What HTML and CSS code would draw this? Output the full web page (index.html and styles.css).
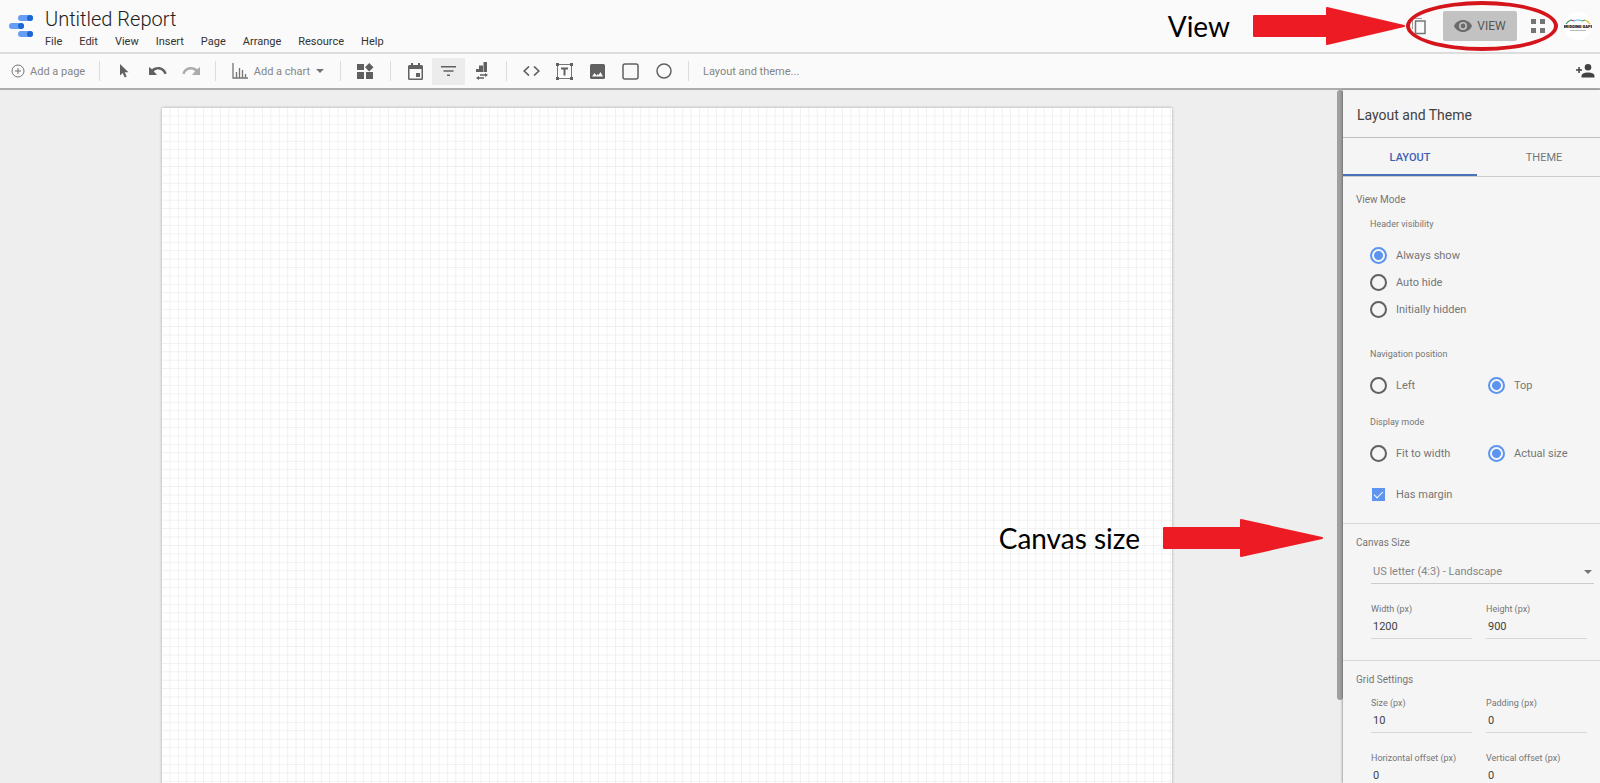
FILE: index.html
```html
<!DOCTYPE html>
<html lang="en">

<head>
    <meta charset="UTF-8">
    <title>Untitled Report</title>
    <link rel="stylesheet" href="styles.css">
</head>

<body>
    <header class="header">
        <svg class="logo" width="24" height="22" viewBox="0 0 24 22">
            <g fill="#669df6">
                <rect x="9" y="0" width="15" height="6" rx="3"/>
                <rect x="0" y="8" width="15" height="6" rx="3"/>
                <rect x="9" y="16" width="15" height="6" rx="3"/>
            </g>
            <g fill="#1a67d2">
                <circle cx="21" cy="3" r="3"/>
                <circle cx="12" cy="11" r="3"/>
                <circle cx="21" cy="19" r="3"/>
            </g>
        </svg>
        <div class="title-block">
            <h1>Untitled Report</h1>
            <nav class="menu">
                <a href="#">File</a>
                <a href="#">Edit</a>
                <a href="#">View</a>
                <a href="#">Insert</a>
                <a href="#">Page</a>
                <a href="#">Arrange</a>
                <a href="#">Resource</a>
                <a href="#">Help</a>
            </nav>
        </div>
        <div class="header-actions">
            <button class="icon-button" aria-label="Copy report">
                <svg width="14" height="18" viewBox="0 0 14 18" fill="none" stroke="#757575">
                    <path d="M.5 12V1.500H10" stroke="#9e9e9e"/>
                    <rect x="3.500" y="4" width="9.500" height="12.500" stroke-width="1.500"/>
                </svg>
            </button>
            <button class="view-button">
                <svg width="18" height="12" viewBox="0 0 18 12">
                    <path d="M9 0C5 0 1.500 2.500 0 6c1.500 3.500 5 6 9 6s7.500-2.500 9-6c-1.500-3.500-5-6-9-6z" fill="#6b6b6b"/>
                    <circle cx="9" cy="6" r="4" fill="#c2c2c2"/>
                    <circle cx="9" cy="6" r="2.400" fill="#6b6b6b"/>
                </svg>
                VIEW
            </button>
            <button class="icon-button" aria-label="Apps">
                <svg width="14" height="14" viewBox="0 0 14 14" fill="#757575">
                    <path d="M0 0h5v5H0zM9 0h5v5H9zM0 9h5v5H0zM9 9h5v5H9z"/>
                </svg>
            </button>
            <button class="avatar" aria-label="Account">
                <svg width="28" height="28" viewBox="0 0 28 28">
                    <circle cx="14" cy="14" r="14" fill="#fff"/>
                    <g fill="none" stroke-width="1.200">
                        <path d="M2 12q2-3 5-4" stroke="#2e9e6b"/>
                        <path d="M7 8l3 1" stroke="#d81b60"/>
                        <path d="M10 9q4-2 8 0" stroke="#5fb3e6"/>
                        <path d="M18 9l3-1" stroke="#43a047"/>
                        <path d="M21 8q3 1 5 4" stroke="#e6b422"/>
                    </g>
                    <text x="14" y="16" text-anchor="middle" font-size="4" font-weight="900">BRIDGING GAPS</text>
                    <path d="M6 18.500h16" stroke="#bbb"/>
                </svg>
            </button>
        </div>

        <div class="note note-view">
            <span>View</span>
            <svg width="152" height="38" viewBox="0 0 152 38">
                <path d="M1 9H74V1L151 19 74 37V29H1z" fill="#ed1c24" stroke="#ed1c24" stroke-width="2" stroke-linejoin="round"/>
            </svg>
        </div>
        <div class="note-circle"></div>
    </header>

    <div class="toolbar">
        <button class="tool tool-page">
            <svg width="14" height="14" viewBox="0 0 14 14" fill="none" stroke="#757575">
                <circle cx="7" cy="7" r="6"/>
                <path d="M7 4v6M4 7h6"/>
            </svg>
            Add a page
        </button>
        <span class="divider"></span>
        <button class="tool" aria-label="Select">
            <svg width="9" height="14" viewBox="0 0 9 14" fill="#616161">
                <path d="M0 0v11.500l2.700-2.500 2 4.500 2-.900-2-4.300H8.500z"/>
            </svg>
        </button>
        <button class="tool" aria-label="Undo">
            <svg width="18" height="8" viewBox="0 0 18 8" fill="#616161">
                <path d="M9.200 0C6.800 0 4.700.900 3 2.300L0 0v8h8L4.800 4.200C6 3.200 7.500 2.600 9.200 2.600c2.800 0 5.300 1.900 6.200 4.600l2.300-.800C16.500 2.700 13.200 0 9.200 0z"/>
            </svg>
        </button>
        <button class="tool" aria-label="Redo">
            <svg width="18" height="8" viewBox="0 0 18 8" fill="#ababab">
                <path d="M8.800 0c2.400 0 4.500.900 6.200 2.300L18 0v8h-8l3.200-3.800C12 3.200 10.500 2.600 8.800 2.600 6 2.600 3.500 4.500 2.600 7.200L.3 6.400C1.500 2.700 4.800 0 8.800 0z"/>
            </svg>
        </button>
        <span class="divider"></span>
        <button class="tool tool-chart">
            <svg width="16" height="16" viewBox="0 0 16 16" fill="none" stroke="#757575" stroke-width="1.300">
                <path d="M1 0v15h15M4.500 15V9M7.500 15V5M10.500 15V7M13.500 15v-4"/>
            </svg>
            Add a chart
            <span class="caret"></span>
        </button>
        <span class="divider"></span>
        <button class="tool" aria-label="Community visualizations">
            <svg width="17" height="16" viewBox="0 0 17 16" fill="#5f5f5f">
                <path d="M0 1h7v6H0zM0 9h7v7H0zM9 9h7v7H9zM12.200 0l4.300 4.200-4.300 4.200-4.200-4.200z"/>
            </svg>
        </button>
        <span class="divider"></span>
        <button class="tool" aria-label="Date range">
            <svg width="15" height="17" viewBox="0 0 15 17">
                <path d="M3 0h2v2h5V0h2v2h1.500q1.500 0 1.500 1.500v12q0 1.500-1.500 1.500h-12Q0 17 0 15.500v-12Q0 2 1.500 2H3zM1.500 6v9.500h12V6zM8 10h4v4H8z" fill="#616161" fill-rule="evenodd"/>
            </svg>
        </button>
        <button class="tool tool-active" aria-label="Filter control">
            <svg width="15" height="10" viewBox="0 0 15 10" fill="#616161">
                <path d="M0 0h15v1.500H0zM2.500 4.300h10v1.500h-10zM6 8.500h3V10H6z"/>
            </svg>
        </button>
        <button class="tool" aria-label="Data control">
            <svg width="12" height="18" viewBox="0 0 12 18" fill="#616161">
                <path d="M0 7h4v3H0zM3 3.500h4V10H3zM7.500 0H11v10H7.500z"/>
                <path d="M9 11l3 2-3 2v-1.300H4v-1.400h5zM3 14v1.300h5v1.400H3V18l-3-2z"/>
            </svg>
        </button>
        <span class="divider"></span>
        <button class="tool" aria-label="URL embed">
            <svg width="17" height="10" viewBox="0 0 17 10" fill="none" stroke="#616161" stroke-width="1.700">
                <path d="M6 .5L1.200 5 6 9.500M11 .5L15.800 5 11 9.500"/>
            </svg>
        </button>
        <button class="tool" aria-label="Text">
            <svg width="17" height="17" viewBox="0 0 17 17">
                <rect x="1.500" y="1.500" width="14" height="14" fill="none" stroke="#757575"/>
                <path d="M0 0h3v3H0zM14 0h3v3h-3zM0 14h3v3H0zM14 14h3v3h-3zM5 4.500h7v2H9.500v6h-2v-6H5z" fill="#616161"/>
            </svg>
        </button>
        <button class="tool" aria-label="Image">
            <svg width="15" height="15" viewBox="0 0 15 15">
                <rect width="15" height="15" rx="1.500" fill="#616161"/>
                <path d="M2 12.500L4.500 9l2 2.500L7.500 10l1 1 2-3 2.500 4.500z" fill="#fafafa"/>
            </svg>
        </button>
        <button class="tool" aria-label="Rectangle">
            <svg width="17" height="17" viewBox="0 0 17 17" fill="none" stroke="#616161" stroke-width="1.500">
                <rect x="1" y="1" width="15" height="15" rx="2"/>
            </svg>
        </button>
        <button class="tool" aria-label="Circle">
            <svg width="16" height="16" viewBox="0 0 16 16" fill="none" stroke="#616161" stroke-width="1.500">
                <circle cx="8" cy="8" r="7"/>
            </svg>
        </button>
        <span class="divider"></span>
        <button class="tool tool-theme">Layout and theme...</button>
        <button class="tool tool-share" aria-label="Share">
            <svg width="19" height="14" viewBox="0 0 19 14" fill="#424242">
                <path d="M2.300 3h1.500v2.200H6v1.500H3.800v2.200H2.300V6.700H0V5.200h2.300z"/>
                <circle cx="12" cy="3.300" r="3.300"/>
                <path d="M5.500 13.500V12q0-3.600 6.500-3.600T18.500 12v1.500z"/>
            </svg>
        </button>
    </div>

    <div class="content">
        <main class="workspace">
            <div class="canvas"></div>
            <div class="note note-size">
                <span>Canvas size</span>
                <svg width="160" height="40" viewBox="0 0 160 40">
                    <path d="M1 10H78V2L159 20 78 38V30H1z" fill="#ed1c24" stroke="#ed1c24" stroke-width="2" stroke-linejoin="round"/>
                </svg>
            </div>
        </main>
        <div class="scrollbar"><div class="thumb"></div></div>

        <aside class="panel">
            <h2>Layout and Theme</h2>
            <div class="tabs">
                <button class="tab selected">LAYOUT</button>
                <button class="tab">THEME</button>
            </div>

            <section class="view-mode">
                <h3>View Mode</h3>
                <div class="group">
                    <h4>Header visibility</h4>
                    <label class="option"><input type="radio" name="header" checked>Always show</label>
                    <label class="option"><input type="radio" name="header">Auto hide</label>
                    <label class="option"><input type="radio" name="header">Initially hidden</label>
                </div>
                <div class="group">
                    <h4>Navigation position</h4>
                    <div class="option-row">
                        <label class="option"><input type="radio" name="navigation">Left</label>
                        <label class="option"><input type="radio" name="navigation" checked>Top</label>
                    </div>
                </div>
                <div class="group">
                    <h4>Display mode</h4>
                    <div class="option-row">
                        <label class="option"><input type="radio" name="display">Fit to width</label>
                        <label class="option"><input type="radio" name="display" checked>Actual size</label>
                    </div>
                </div>
                <div class="group">
                    <label class="option"><input type="checkbox" checked>Has margin</label>
                </div>
            </section>

            <section>
                <h3>Canvas Size</h3>
                <div class="select-wrap">
                    <select aria-label="Canvas size">
                        <option>US letter (4:3) - Landscape</option>
                    </select>
                    <span class="caret"></span>
                </div>
                <div class="fields">
                    <label class="field">Width (px)<input type="text" value="1200"></label>
                    <label class="field">Height (px)<input type="text" value="900"></label>
                </div>
            </section>

            <section>
                <h3>Grid Settings</h3>
                <div class="fields">
                    <label class="field">Size (px)<input type="text" value="10"></label>
                    <label class="field">Padding (px)<input type="text" value="0"></label>
                    <label class="field">Horizontal offset (px)<input type="text" value="0"></label>
                    <label class="field">Vertical offset (px)<input type="text" value="0"></label>
                </div>
            </section>
        </aside>
    </div>
</body>

</html>
```
FILE: styles.css
```css
* {
    box-sizing: border-box;
}

body {
    margin: 0;
    height: 100vh;
    display: flex;
    flex-direction: column;
    overflow: hidden;
    font-family: Roboto, Arial, sans-serif;
    font-size: 12px;
    color: #757575;
    background: #eee;
}

h1,
h2,
h3,
h4 {
    margin: 0;
    font-weight: 400;
}

button {
    padding: 0;
    border: none;
    background: none;
    font: inherit;
    color: inherit;
    cursor: pointer;
}

svg {
    display: block;
    flex: none;
}

/* Header */
.header {
    position: relative;
    display: flex;
    height: 54px;
    padding-left: 9px;
    background: #fafafa;
    border-bottom: 2px solid #ddd;
}

.logo {
    margin-top: 15px;
}

.title-block {
    margin-left: 12px;
    padding-top: 7px;
}

.title-block h1 {
    font-size: 20px;
    font-weight: 300;
    line-height: 24px;
    color: #212121;
}

.menu {
    display: flex;
    gap: 17px;
    margin-top: 3px;
}

.menu a {
    font-size: 11px;
    line-height: 16px;
    color: #333;
    text-decoration: none;
}

.header-actions {
    display: flex;
    align-items: center;
    gap: 12px;
    margin-left: auto;
    padding-right: 8px;
}

.icon-button {
    display: flex;
    padding: 2px;
}

.view-button {
    display: flex;
    align-items: center;
    justify-content: center;
    gap: 5px;
    width: 74px;
    height: 30px;
    margin-left: 3px;
    background: #c2c2c2;
    border-radius: 2px;
    color: #555;
}

.avatar {
    margin-left: 5px;
    border-radius: 50%;
}

/* Red annotations */
.note {
    position: absolute;
    display: flex;
    align-items: center;
    gap: 23px;
    font-family: Lato, sans-serif;
    font-size: 28px;
    line-height: 38px;
    color: #000;
    white-space: nowrap;
}

.note-view {
    top: 7px;
    right: 195px;
}

.note-size {
    top: 428px;
    right: 14px;
}

.note-circle {
    position: absolute;
    top: 1px;
    right: 42px;
    width: 152px;
    height: 50px;
    border: 4px solid #d4151c;
    border-radius: 50%;
    pointer-events: none;
}

/* Toolbar */
.toolbar {
    display: flex;
    align-items: center;
    height: 36px;
    background: #fafafa;
    border-bottom: 2px solid #adadad;
    font-size: 11px;
    color: #858585;
}

.tool {
    display: flex;
    align-items: center;
    justify-content: center;
    width: 33px;
    height: 27px;
}

.tool-page {
    justify-content: flex-start;
    gap: 5px;
    width: 91px;
    padding-left: 11px;
}

.tool-chart {
    gap: 6px;
    width: 108px;
}

.tool-active {
    background: #ececec;
}

.tool-theme {
    width: auto;
    padding-left: 6px;
}

.tool-share {
    width: 30px;
    margin-left: auto;
}

.divider {
    width: 1px;
    height: 20px;
    margin: 0 8px;
    background: #ddd;
}

.caret {
    border: 4px solid transparent;
    border-top-color: #757575;
    border-bottom: none;
}

/* Report area */
.content {
    flex: 1;
    display: flex;
    min-height: 0;
}

.workspace {
    position: relative;
    flex: 1;
    padding: 18px 165px 0 162px;
    overflow: hidden;
}

.canvas {
    aspect-ratio: 4 / 3;
    background-color: #fff;
    background-image:
        linear-gradient(to left, #f0f0f0 1px, transparent 1px),
        linear-gradient(to top, #f0f0f0 1px, transparent 1px);
    background-size: calc(100% / 120) calc(100% / 90);
    box-shadow: 0 0 3px rgba(0, 0, 0, 0.3);
}

.scrollbar {
    width: 6px;
}

.thumb {
    height: 88%;
    background: #a0a0a0;
    border-radius: 3px;
}

/* Side panel */
.panel {
    width: 257px;
    overflow: hidden;
    background: #f5f5f5;
    box-shadow: -1px 0 2px rgba(0, 0, 0, 0.3);
}

.panel h2 {
    padding: 3px 0 0 14px;
    font-size: 14px;
    line-height: 44px;
    color: #424242;
    border-bottom: 1px solid #bdbdbd;
}

.tabs {
    display: flex;
    border-bottom: 1px solid #ccc;
}

.tab {
    flex: 0 0 134px;
    height: 38px;
    font-size: 11px;
}

.tab.selected {
    color: #3f5fb5;
    font-weight: 500;
    box-shadow: inset 0 -2px #4a72b8;
}

.panel section {
    padding: 11px 6px 21px 13px;
    border-bottom: 1px solid #d6d6d6;
}

.panel .view-mode {
    padding-top: 15px;
    padding-bottom: 15px;
}

.panel h3 {
    margin-bottom: 9px;
    font-size: 10px;
    line-height: 16px;
}

.group {
    margin-left: 14px;
}

.group + .group {
    margin-top: 16px;
}

.group:nth-of-type(2) {
    margin-top: 24px;
}

.group:last-child {
    margin-top: 14px;
}

.group h4 {
    margin-bottom: 12px;
    font-size: 9px;
    line-height: 14px;
    margin-bottom: 11px;
}

.option {
    display: flex;
    align-items: center;
    gap: 9px;
    height: 27px;
    font-size: 11px;
}

.option-row {
    display: grid;
    grid-template-columns: 118px 1fr;
}

input[type="radio"] {
    appearance: none;
    width: 17px;
    height: 17px;
    margin: 0;
    border: 2px solid #616161;
    border-radius: 50%;
}

input[type="radio"]:checked {
    border-color: #5c94f0;
    background: radial-gradient(circle, #5c94f0 4px, transparent 5px);
}

input[type="checkbox"] {
    appearance: none;
    display: flex;
    align-items: center;
    justify-content: center;
    width: 13px;
    height: 13px;
    margin: 0 2px;
    background: #5c94f0;
}

input[type="checkbox"]::before {
    content: "";
    width: 8px;
    height: 4px;
    margin-bottom: 2px;
    border: solid #fff;
    border-width: 0 0 1px 1px;
    transform: rotate(-45deg);
}

.select-wrap {
    position: relative;
    margin: 0 0 19px 15px;
}

.select-wrap .caret {
    position: absolute;
    top: 10px;
    right: 2px;
    pointer-events: none;
}

select {
    appearance: none;
    width: 100%;
    height: 24px;
    padding: 0 2px;
    border: none;
    border-bottom: 1px solid #ccc;
    border-radius: 0;
    background: none;
    font: inherit;
    font-size: 11px;
    color: #858585;
}

.fields {
    display: grid;
    grid-template-columns: 1fr 1fr;
    gap: 19px 14px;
    margin: 0 7px 0 15px;
}

.field {
    font-size: 9px;
    line-height: 12px;
    white-space: nowrap;
}

.field input {
    display: block;
    width: 100%;
    height: 24px;
    padding: 0 2px;
    border: none;
    border-bottom: 1px solid #d6d6d6;
    background: none;
    font-family: inherit;
    font-size: 11px;
    color: #424242;
}
```
